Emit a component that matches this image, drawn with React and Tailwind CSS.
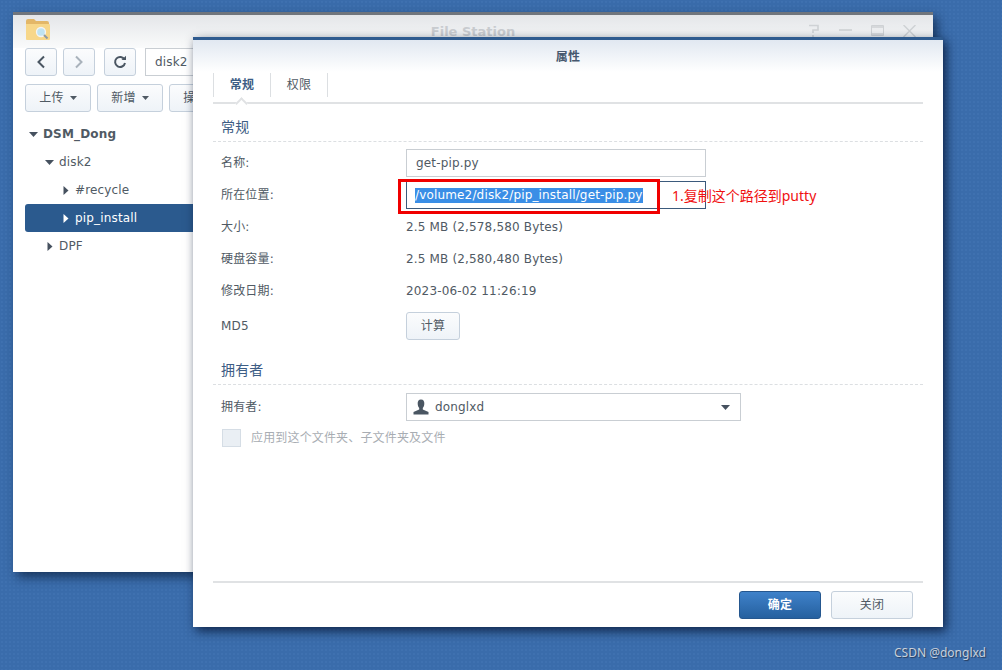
const Caret = ({ dir = "down", light = false }) => {
  const color = light ? "#ffffff" : "#46515f";
  if (dir === "right") {
    return (
      <svg width="6" height="9" viewBox="0 0 6 9" className="shrink-0">
        <path d="M0.5 0 L5.5 4.5 L0.5 9 Z" fill={color} />
      </svg>
    );
  }
  return (
    <svg width="9" height="5" viewBox="0 0 9 5" className="shrink-0">
      <path d="M0 0 H9 L4.5 5 Z" fill={color} />
    </svg>
  );
};

const FolderIcon = () => (
  <svg width="26" height="24" viewBox="0 0 26 24">
    <path d="M1 3 Q1 1 3 1 H9 L11 3 H22 Q24 3 24 5 V7 H1 Z" fill="#e3b768" />
    <path d="M1 6 H24 Q25 6 25 7 V21 Q25 22 24 22 H2 Q1 22 1 21 Z" fill="#f7d78a" />
    <circle cx="16" cy="14" r="4.5" fill="#bfe3f2" stroke="#f4f4f4" strokeWidth="1.3" />
    <path d="M19 17 L22.5 20.5" stroke="#8d9aa5" strokeWidth="2" />
  </svg>
);

const NavButton = ({ children }) => (
  <div className="w-8 h-7 flex items-center justify-center rounded-[3px] border border-[#c5d0dc] bg-gradient-to-b from-[#fbfcfd] to-[#eef3f8]">
    {children}
  </div>
);

const ToolButton = ({ label }) => (
  <div className="w-[66px] h-7 shrink-0 flex items-center justify-center gap-1.5 rounded-[3px] border border-[#c5d0dc] bg-gradient-to-b from-[#fbfcfd] to-[#eef3f8] text-[12px] text-[#505a64]">
    {label}
    <svg width="7" height="4" viewBox="0 0 7 4"><path d="M0 0 H7 L3.5 4 Z" fill="#505a64" /></svg>
  </div>
);

const TreeRow = ({ label, indent, dir, bold, selected }) => (
  <div className={`h-7 flex items-center rounded-[3px] ${indent} ${selected ? "bg-[#2b5a8e] text-white" : "text-[#505a64]"} ${bold ? "font-bold" : ""}`}>
    <span className={`flex shrink-0 ${dir === "right" ? "w-3" : "w-[14px]"}`}><Caret dir={dir} light={selected} /></span>
    <span>{label}</span>
  </div>
);

const Row = ({ label, children }) => (
  <div className="h-8 flex items-center text-[12px] text-[#505a64]">
    <div className="w-[193px] pl-2 shrink-0">{label}</div>
    {children}
  </div>
);

const SectionTitle = ({ children }) => (
  <div className="pl-2 h-[29px] flex items-center text-[14px] text-[#3d5d85] border-b border-dashed border-[#dcdfe2]">{children}</div>
);

const BackWindow = () => (
  <div className="absolute left-[13px] top-3 w-[920px] h-[560px] bg-white border-t-[3px] border-[#70757c] shadow-[4px_5px_10px_rgba(10,30,60,0.7)]">
    <div className="h-[33px] bg-gradient-to-b from-[#e4e6e9] to-[#fafbfb] relative">
      <div className="absolute left-3 top-[3px]"><FolderIcon /></div>
      <div className="absolute left-0 right-0 top-[7px] text-center text-[13px] tracking-normal font-bold text-[#c9ccd0]">File Station</div>
      <div className="absolute right-[17px] top-[9px] flex items-center gap-[19px] text-[#cfd2d5]">
        <svg width="12" height="13" viewBox="0 0 12 13" fill="none" stroke="currentColor" strokeWidth="1.6"><path d="M1 1.5 H10 V6 H5 V9 M5 11 V13" /></svg>
        <svg width="13" height="13" viewBox="0 0 13 13" stroke="currentColor" strokeWidth="1.6"><path d="M0 6 H13" /></svg>
        <svg width="13" height="11" viewBox="0 0 13 11" fill="none" stroke="currentColor"><path d="M0.5 0.5 H12.5 V10.5 H0.5 Z" /><path d="M0 2 H13 M0 9 H13" strokeWidth="1.4" /></svg>
        <svg width="13" height="12" viewBox="0 0 13 12" stroke="currentColor" strokeWidth="1.5"><path d="M0.5 0 L12.5 12 M12.5 0 L0.5 12" /></svg>
      </div>
    </div>
    <div className="px-3 flex flex-col gap-2">
      <div className="flex items-center">
        <NavButton>
          <svg width="10" height="14" viewBox="0 0 10 14" fill="none" stroke="#4a5662" strokeWidth="2"><path d="M8 1.5 L2.5 7 L8 12.5" /></svg>
        </NavButton>
        <div className="ml-1.5">
          <NavButton>
            <svg width="10" height="14" viewBox="0 0 10 14" fill="none" stroke="#a9b2bb" strokeWidth="2"><path d="M2 1.5 L7.5 7 L2 12.5" /></svg>
          </NavButton>
        </div>
        <div className="ml-[9px]">
          <NavButton>
            <svg width="14" height="14" viewBox="0 0 14 14" fill="none" stroke="#4a5662" strokeWidth="2"><path d="M11.5 4.5 A5 5 0 1 0 12 8" /><path d="M8.5 5 H13 V0.8 Z" fill="#4a5662" stroke="none" /></svg>
          </NavButton>
        </div>
        <div className="ml-[9px] w-[120px] h-7 border border-[#c9ced3] flex items-center pl-[9px] text-[12px] text-[#505a64]">disk2</div>
      </div>
      <div className="flex items-center gap-1.5">
        <ToolButton label="上传" />
        <ToolButton label="新增" />
        <ToolButton label="操作" />
      </div>
    </div>
    <div className="mx-3 mt-2 text-[12px]">
      <TreeRow label="DSM_Dong" indent="pl-[4px]" dir="down" bold />
      <TreeRow label="disk2" indent="pl-[20px]" dir="down" />
      <TreeRow label="#recycle" indent="pl-[38px]" dir="right" />
      <TreeRow label="pip_install" indent="pl-[38px]" dir="right" selected />
      <TreeRow label="DPF" indent="pl-[22px]" dir="right" />
    </div>
  </div>
);

const Dialog = () => (
  <div className="absolute left-[193px] top-[37px] w-[750px] h-[590px] bg-white border-t-[3px] border-[#2f5b8f] shadow-[3px_4px_10px_rgba(5,20,50,0.8)] flex flex-col">
    <div className="h-[32px] pt-[2px] bg-gradient-to-b from-[#e1e8f1] to-[#ffffff] flex items-center justify-center text-[12px] font-bold text-[#46586e]">属性</div>
    <div className="px-5 flex-1 flex flex-col">
      <div className="h-[32px] border-b-2 border-[#e0e2e4] flex items-start pt-[1px] relative">
        <div className="w-[58px] h-[24px] border-x border-[#dcdfe2] flex items-center justify-center text-[12px] font-bold text-[#3d5d85]">常规</div>
        <div className="w-[57px] h-[24px] border-r border-[#dcdfe2] flex items-center justify-center text-[12px] text-[#505a64]">权限</div>
        <div className="absolute left-[24px] bottom-[-6px] w-[9px] h-[9px] rotate-45 bg-white border-l-2 border-t-2 border-[#e0e2e4]" />
      </div>
      <div className="mt-[9px]"><SectionTitle>常规</SectionTitle></div>
      <div className="pt-[5px]">
        <Row label="名称:">
          <div className="w-[300px] h-7 border border-[#c9ced3] flex items-center pl-[9px]">get-pip.py</div>
        </Row>
        <Row label="所在位置:">
          <div className="w-[300px] h-7 border border-[#3b5a7c] flex items-center pl-2">
            <span className="bg-[#3a8ee6] text-white leading-[15px]">/volume2/disk2/pip_install/get-pip.py</span>
          </div>
        </Row>
        <Row label="大小:">2.5 MB (2,578,580 Bytes)</Row>
        <Row label="硬盘容量:">2.5 MB (2,580,480 Bytes)</Row>
        <Row label="修改日期:">2023-06-02 11:26:19</Row>
        <div className="mt-[3px]">
          <Row label="MD5">
            <div className="w-[54px] h-7 rounded-[3px] border border-[#c5d0dc] bg-gradient-to-b from-[#fbfcfd] to-[#eef3f8] flex items-center justify-center">计算</div>
          </Row>
        </div>
      </div>
      <div className="mt-[14px]"><SectionTitle>拥有者</SectionTitle></div>
      <div className="pt-[6px]">
        <Row label="拥有者:">
          <div className="w-[335px] h-7 border border-[#c9ced3] flex items-center pl-[6px] pr-[10px]">
            <svg width="16" height="16" viewBox="0 0 16 16" className="mr-[6px]">
              <path d="M8 0.5 C5.5 0.5 4.5 2.5 4.7 5 C4.8 7 5.5 8 6.2 9 V10.5 L0.5 13 V15.5 H15.5 V13 L9.8 10.5 V9 C10.5 8 11.2 7 11.3 5 C11.5 2.5 10.5 0.5 8 0.5 Z" fill="#4a5662" />
            </svg>
            <span className="flex-1">donglxd</span>
            <Caret dir="down" />
          </div>
        </Row>
      </div>
      <div className="pl-[9px] flex items-center h-[18px] mt-[6px] text-[12px] text-[#a8adb3]">
        <div className="w-[19px] h-[18px] bg-[#eaeff4] border border-[#d5dde5] mr-[10px]" />
        应用到这个文件夹、子文件夹及文件
      </div>
      <div className="mt-auto h-[46px] border-t-2 border-[#e0e2e4] flex items-start justify-end gap-[10px] pr-[10px] pt-2">
        <div className="w-[82px] h-7 rounded-[3px] border border-[#25578f] bg-gradient-to-b from-[#3f82ca] to-[#25609f] flex items-center justify-center text-[12px] font-bold text-white">确定</div>
        <div className="w-[82px] h-7 rounded-[3px] border border-[#c5d0dc] bg-gradient-to-b from-[#fbfcfd] to-[#eef3f8] flex items-center justify-center text-[12px] text-[#505a64]">关闭</div>
      </div>
    </div>
  </div>
);

export default function App() {
  return (
    <div className="relative w-[1002px] h-[670px] overflow-hidden bg-[#3a6cab] bg-[radial-gradient(#3f71b0_1px,transparent_1px)] bg-[length:4px_4px] tracking-[0.16px] font-['DejaVu_Sans','Noto_Sans_CJK_SC',sans-serif]">
      <BackWindow />
      <Dialog />
      {/* screenshot annotation */}
      <div className="absolute left-[398px] top-[179px] w-[262px] h-[35px] border-[3px] border-[#f00000]" />
      <div className="absolute left-[672px] top-[185px] tracking-normal text-[14px] text-[#f01010] font-['Noto_Sans','Noto_Sans_CJK_SC',sans-serif]">1.复制这个路径到putty</div>
      <div className="absolute left-[894px] top-[644px] tracking-normal text-[12px] text-[#c8d0da] font-['Noto_Sans',sans-serif] [text-shadow:1px_1px_1px_rgba(30,40,60,0.7)]">CSDN @donglxd</div>
    </div>
  );
}
